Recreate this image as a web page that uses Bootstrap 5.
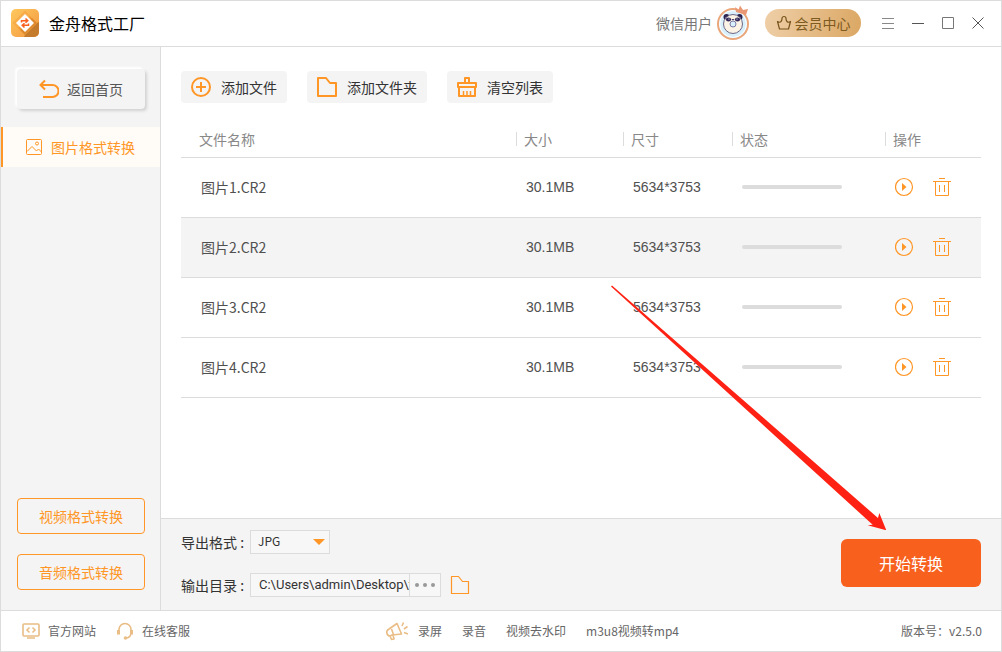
<!DOCTYPE html>
<html lang="zh-CN">
<head>
<meta charset="utf-8">
<meta name="viewport" content="width=device-width, initial-scale=1">
<title>金舟格式工厂</title>
<link href="https://cdn.jsdelivr.net/npm/bootstrap@5.3.0/dist/css/bootstrap.min.css" rel="stylesheet">
<style>
:root { --accent: #ff9626; --line: #dcdcdc; --panel: #f4f4f4; }
body { font-family: "Noto Sans CJK SC", sans-serif; font-size: 14px; line-height: 20px; font-weight: 400; color: #333; }
svg { display: block; flex-shrink: 0; }
.app { border: 1px solid var(--line); }
.topbar { height: 46px; border-bottom: 1px solid var(--line); padding: 0 8px 2px 10px; }
.app-name { font-size: 16px; color: #000; margin-left: 10px; }
.user-name { color: #777; }
.vip { height: 28px; width: 96px; border-radius: 14px; background: linear-gradient(100deg, #efcfa8, #dba763); color: #7d5a20; gap: 3px; }
.win-btn { width: 30px; height: 30px; padding: 0; border: 0; background: none; color: #555; display: flex; align-items: center; justify-content: center; }
.side { width: 160px; background: var(--panel); border-right: 1px solid var(--line); }
.back-btn { margin: 22px 15px 0 16px; height: 40px; border: 0; border-radius: 4px; background: var(--panel); color: #555; box-shadow: 2px 2px 3px #d2d2d2, -2px -2px 2px #fff; gap: 8px; }
.side-link { margin-top: 18px; height: 40px; border-left: 2px solid var(--accent); background: #fffcf7; color: var(--accent); padding-left: 22px; gap: 8px; text-decoration: none; }
.switches { padding: 0 15px 20px 16px; gap: 20px; }
.switch-btn { height: 36px; border: 1px solid var(--accent); border-radius: 4px; background: none; color: var(--accent); padding: 0; }
.tool-row { gap: 20px; }
.tool-btn { height: 32px; border: 0; border-radius: 4px; background: var(--panel); color: #333; padding: 0 10px 0 9px; gap: 9px; }
.files { padding: 24px 20px 0; }
.file-table { table-layout: fixed; margin-top: 18px; }
.file-table th { height: 36px; padding: 0; font-weight: 400; color: #888; border-bottom: 1px solid var(--line); vertical-align: middle; }
.file-table th span { display: block; line-height: 14px; border-left: 1px solid var(--line); padding-left: 7px; }
.file-table th:first-child { padding-left: 18px; }
.file-table td { height: 60px; padding: 0 0 0 10px; border-bottom: 1px solid var(--line); color: #505050; vertical-align: middle; }
.file-table td:first-child { padding-left: 20px; }
.file-table tr.picked td { background: var(--panel); }
.latin { font-family: "Liberation Sans", sans-serif; }
.file-table .progress { width: 100px; height: 4px; border-radius: 2px; background: var(--line); }
.icon-btn { border: 0; background: none; padding: 0; }
.file-actions { gap: 18px; }
.output { background: var(--panel); border-top: 1px solid var(--line); padding: 11px 20px 13px; }
.output label { width: 69px; color: #333; }
.output-fields { gap: 19px; }
.output .form-select, .path-box { height: 24px; border: 1px solid var(--line); border-radius: 0; background-color: #f7f7f7; color: #333; font-size: 12px; line-height: 18px; }
.output .form-select { width: 80px; padding: 0 20px 2px 7px; background-size: 12px 6px; background-position: right 4px center;
  background-image: url("data:image/svg+xml,%3Csvg xmlns='http://www.w3.org/2000/svg' viewBox='0 0 12 6'%3E%3Cpath d='M0 0h12L6 6z' fill='%23ff9626'/%3E%3C/svg%3E"); }
.path-box { width: 191px; }
.path-box input { width: 158px; border: 0; background: none; padding: 0 0 0 8px; font-family: Roboto, "Noto Sans CJK SC", sans-serif; font-size: 13px; color: #333; }
.path-box button { width: 31px; border: 0; border-left: 1px solid var(--line); background: none; padding: 0; display: flex; align-items: center; justify-content: center; }
.start-btn { width: 140px; height: 48px; border: 0; border-radius: 6px; background: #f8601e; color: #fff; font-size: 16px; margin-top: 9px; }
.foot { min-height: 41px; border-top: 1px solid var(--line); font-size: 12px; padding: 0 19px 0 21px; color: #666; }
.foot a { color: #666; text-decoration: none; }
.foot-links { gap: 20px; }
.foot-mid { margin-left: 195px; }
.foot-mid .promo { gap: 9px; }
.pointer { right: 115px; bottom: 121px; pointer-events: none; }
</style>
</head>
<body>
<div class="app position-relative d-flex flex-column min-vh-100">
  <header class="topbar d-flex align-items-center">
    <svg width="28" height="28" viewBox="0 0 28 28">
      <defs><linearGradient id="lg" x1="0" y1="0" x2="1" y2="1"><stop offset="0" stop-color="#ffc95e"/><stop offset="1" stop-color="#f29640"/></linearGradient></defs>
      <rect width="28" height="28" rx="5" fill="url(#lg)"/>
      <path d="M26 14l2-1v10a5 5 0 0 1-5 5H13l1-2z" fill="#c47c2c"/>
      <path d="M14 2l12 12-12 12L2 14z" fill="#f39a35"/>
      <path d="M14 2L2 14l5 5L19 7z" fill="#f8ad4b"/>
      <path d="M26 14L14 26l-5-5 12-12z" fill="#dc8a2d"/>
      <path d="M14 5l9 9-9 9-9-9z" fill="#fff"/>
      <path d="M10.500 13.500v-1.700h6M14.500 9.500l2.300 2.300-2.300 2M17.500 14.500v1.700h-6M13.500 18.500l-2.300-2.300 2.300-2" fill="none" stroke="#f8601e" stroke-width="1.500"/>
    </svg>
    <span class="app-name">金舟格式工厂</span>
    <span class="user-name ms-auto">微信用户</span>
    <svg class="ms-1" width="34" height="36" viewBox="0 0 34 36">
      <circle cx="17" cy="19" r="15" fill="#d8effc" stroke="#eba679" stroke-width="2"/>
      <circle cx="17" cy="19" r="13.400" fill="none" stroke="#fff"/>
      <circle cx="10.500" cy="12" r="3" fill="#2d2350"/><circle cx="23.500" cy="12" r="3" fill="#2d2350"/>
      <circle cx="17" cy="19" r="9.500" fill="#fbf4e6" stroke="#6c6686"/>
      <ellipse cx="12.500" cy="14.500" rx="2.600" ry="2" fill="#33285a"/><ellipse cx="21.500" cy="14.500" rx="2.600" ry="2" fill="#33285a"/>
      <circle cx="13" cy="14" r=".6" fill="#fff"/><circle cx="21" cy="14" r=".6" fill="#fff"/>
      <path d="M15.500 14h3L17 15.500z" fill="#33285a"/>
      <circle cx="17" cy="19" r="3" fill="#d8effc" stroke="#7a78a4"/>
      <path d="M19 2l3.500 3L24 .5 27 5l5-1-2 6-10-3z" fill="#ea9873"/>
    </svg>
    <button type="button" class="vip d-flex align-items-center justify-content-center border-0 p-0" style="margin-left:15px">
      <svg width="16" height="16" viewBox="0 0 16 16" fill="none" stroke="#76521a" stroke-width="1.200" stroke-linejoin="round"><path d="M3.500 14L1.500 6.500Q4 8 5 6.500 6 5.500 6 3.500a2 2 0 0 1 4 0q0 2 1 3 1.500 1.500 3.500 0L12.500 14z"/></svg>
      会员中心
    </button>
    <div class="d-flex ms-2 ps-1">
      <button type="button" class="win-btn" aria-label="菜单"><svg width="12" height="12"><path d="M0 1.500h12M0 6.500h12M0 11.500h12" stroke="#888"/></svg></button>
      <button type="button" class="win-btn" aria-label="最小化"><svg width="12" height="12"><path d="M0 6.500h12" stroke="#555"/></svg></button>
      <button type="button" class="win-btn" aria-label="最大化"><svg width="12" height="12"><path d="M.5.500h11v11H.5z" fill="none" stroke="#777"/></svg></button>
      <button type="button" class="win-btn" aria-label="关闭"><svg width="12" height="12"><path d="M.5.500l11 11M11.500.500l-11 11" stroke="#555"/></svg></button>
    </div>
  </header>

  <div class="d-flex flex-grow-1">
    <nav class="side d-flex flex-column flex-shrink-0">
      <button type="button" class="back-btn d-flex align-items-center justify-content-center">
        <svg width="20" height="20" viewBox="0 0 20 20" fill="none" stroke="#ff9626" stroke-width="2"><path d="M6 1.500L1.500 6 6 10.500M2 6h11.500a6 6 0 0 1 0 12H4"/></svg>
        返回首页
      </button>
      <a href="#" class="side-link d-flex align-items-center">
        <svg width="18" height="18" viewBox="0 0 18 18" fill="none" stroke="#ff9626"><rect x="1.500" y="1.500" width="15" height="15" rx="1"/><circle cx="12" cy="5.500" r="1.500"/><path d="M2 13.500l5-5 4.500 4.500 2-2 3 3"/></svg>
        图片格式转换
      </a>
      <div class="switches d-flex flex-column mt-auto">
        <button type="button" class="switch-btn">视频格式转换</button>
        <button type="button" class="switch-btn">音频格式转换</button>
      </div>
    </nav>

    <main class="d-flex flex-column flex-grow-1">
      <section class="files flex-grow-1">
        <div class="tool-row d-flex">
          <button type="button" class="tool-btn d-flex align-items-center">
            <svg width="22" height="22" viewBox="0 0 22 22" fill="none" stroke="#ff9626" stroke-width="2"><circle cx="11" cy="11" r="9"/><path d="M11 6v10M6 11h10"/></svg>添加文件</button>
          <button type="button" class="tool-btn d-flex align-items-center">
            <svg width="22" height="22" viewBox="0 0 22 22" fill="none" stroke="#ff9626" stroke-width="2" stroke-linejoin="round"><path d="M2 2h8l4 5h6v13H2z"/></svg>添加文件夹</button>
          <button type="button" class="tool-btn d-flex align-items-center">
            <svg width="22" height="22" viewBox="0 0 22 22" fill="none" stroke="#ff9626" stroke-width="2" stroke-linejoin="round"><path d="M9 7V2h4v5M2 7h18v4H2zM3 11v9h16v-9"/><path d="M7.500 20v-5M11 20v-5M14.500 20v-5" stroke-width="1.500"/></svg>清空列表</button>
        </div>
        <table class="file-table w-100">
          <colgroup><col><col style="width:107px"><col style="width:109px"><col style="width:153px"><col style="width:96px"></colgroup>
          <thead><tr><th scope="col">文件名称</th><th scope="col"><span>大小</span></th><th scope="col"><span>尺寸</span></th><th scope="col"><span>状态</span></th><th scope="col"><span>操作</span></th></tr></thead>
          <tbody id="rows"></tbody>
        </table>
      </section>
      <section class="output d-flex justify-content-between align-items-start">
        <div class="output-fields d-flex flex-column">
          <div class="d-flex align-items-center">
            <label for="fmt">导出格式 :</label>
            <select id="fmt" class="form-select"><option>JPG</option><option>PNG</option></select>
          </div>
          <div class="d-flex align-items-center">
            <label for="dir">输出目录 :</label>
            <div class="path-box d-flex">
              <input id="dir" type="text" value="C:\Users\admin\Desktop\test">
              <button type="button" aria-label="浏览"><svg width="20" height="4" fill="#999"><circle cx="2" cy="2" r="2"/><circle cx="10" cy="2" r="2"/><circle cx="18" cy="2" r="2"/></svg></button>
            </div>
            <button type="button" class="icon-btn ms-2" aria-label="打开目录"><svg width="22" height="22" viewBox="0 0 22 22" fill="none" stroke="#ff9626" stroke-width="1.200" stroke-linejoin="round"><path d="M2.500 2.500h7l4 5h6v12h-17z"/></svg></button>
          </div>
        </div>
        <button type="button" class="start-btn">开始转换</button>
      </section>
    </main>
  </div>

  <footer class="foot d-flex align-items-center">
    <div class="foot-links d-flex">
      <a href="#" class="d-flex align-items-center gap-2"><svg width="18" height="18" viewBox="0 0 18 18" fill="none" stroke="#e9bd85" stroke-width="1.600"><rect x="1" y="2" width="16" height="12" rx="1"/><path d="M7.500 5.500L5 8 7.500 10.500M10.500 5.500L13 8 10.500 10.500M5 16h8"/></svg>官方网站</a>
      <a href="#" class="d-flex align-items-center gap-2"><svg width="18" height="18" viewBox="0 0 18 18" fill="none" stroke="#e9bd85" stroke-width="1.600"><path d="M3 9V7.500a6 6 0 0 1 12 0V9M15 12c-1 3-3 4-5 4"/><path d="M2.500 8v4.500M15.500 8v4.500" stroke-width="3"/><circle cx="9.500" cy="16" r="1" fill="#e9bd85"/></svg>在线客服</a>
    </div>
    <div class="foot-links foot-mid d-flex align-items-center">
      <a href="#" class="promo d-flex align-items-center"><svg width="24" height="20" viewBox="0 0 24 20" fill="none" stroke="#e9bd85" stroke-width="1.600" stroke-linejoin="round"><path d="M4 8l8-5.500 4.500 10.500-9.500 1-2 1c-3 0-5-5-1-7zM6.500 8l2 5.500M5 15l1.500 3.500 2.500-.5-1-4M17 5l1.500-3.500M19 8l3.500-2.500M19 11.500l4 1.500"/></svg>录屏</a>
      <a href="#">录音</a><a href="#">视频去水印</a><a href="#">m3u8视频转mp4</a>
    </div>
    <span class="ms-auto">版本号：v2.5.0</span>
  </footer>

  <svg class="pointer position-absolute" width="276" height="246" viewBox="610 284 276 246"><path d="M611 286.500l1-1L878 518l1.300-5 7 17.300-18.600-5 5-.5z" fill="#ff2214"/></svg>
</div>
<script>
document.getElementById("rows").innerHTML = [1, 2, 3, 4].map(n => `
<tr class="${n === 2 ? "picked" : ""}"><td>图片${n}.CR2</td><td class="latin">30.1MB</td><td class="latin">5634*3753</td>
<td><div class="progress" role="progressbar" aria-label="转换进度" aria-valuenow="0" aria-valuemin="0" aria-valuemax="100"></div></td>
<td><div class="file-actions d-flex align-items-center">
<button type="button" class="icon-btn" aria-label="开始"><svg width="20" height="20" viewBox="0 0 20 20"><circle cx="9" cy="10" r="8.500" fill="none" stroke="#ff9626" stroke-width="1.200"/><path d="M7 6l4.500 4L7 14z" fill="#ff9626"/></svg></button>
<button type="button" class="icon-btn" aria-label="删除"><svg width="18" height="20" viewBox="0 0 18 20" fill="none" stroke="#ff9626"><path d="M6 1.500h6M0 4.500h18M2.500 4.500v14h13v-14M6.500 8v7M11.500 8v7"/></svg></button>
</div></td></tr>`).join("");
</script>
<script src="https://cdn.jsdelivr.net/npm/bootstrap@5.3.0/dist/js/bootstrap.bundle.min.js"></script>
</body>
</html>
